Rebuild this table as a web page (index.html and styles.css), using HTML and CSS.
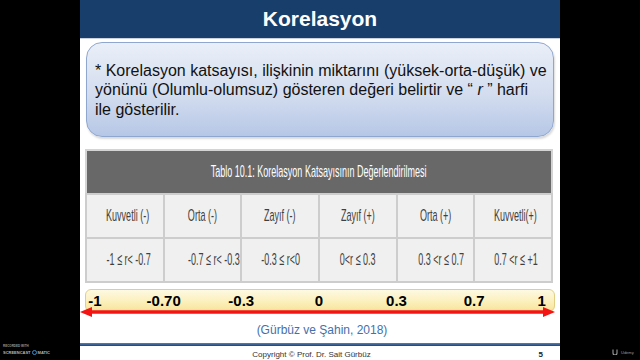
FILE: index.html
```html
<!DOCTYPE html>
<html lang="tr">
<head>
<meta charset="utf-8">
<title>Korelasyon</title>
<link rel="stylesheet" href="styles.css">
</head>
<body>
<div class="stage">
  <div class="slide">
    <header class="title">Korelasyon</header>
    <div class="note">
      <p>* Korelasyon katsayısı, ilişkinin miktarını (yüksek-orta-düşük) ve<br>yönünü (Olumlu-olumsuz) gösteren değeri belirtir ve “ <i>r</i> ” harfi<br>ile gösterilir.</p>
    </div>
    <table class="tbl">
      <thead>
        <tr><th colspan="6"><span class="narrow">Tablo 10.1: Korelasyon Katsayısının Değerlendirilmesi</span></th></tr>
      </thead>
      <tbody>
        <tr>
          <td><span class="narrow">Kuvvetli (-)</span></td>
          <td><span class="narrow">Orta (-)</span></td>
          <td><span class="narrow">Zayıf (-)</span></td>
          <td><span class="narrow">Zayıf (+)</span></td>
          <td><span class="narrow">Orta (+)</span></td>
          <td><span class="narrow">Kuvvetli(+)</span></td>
        </tr>
        <tr>
          <td><span class="narrow">-1 ≤ r&lt; -0.7</span></td>
          <td><span class="narrow">-0.7 ≤ r&lt; -0.3</span></td>
          <td><span class="narrow">-0.3 ≤ r&lt;0</span></td>
          <td><span class="narrow">0&lt;r ≤ 0.3</span></td>
          <td><span class="narrow">0.3 &lt;r ≤ 0.7</span></td>
          <td><span class="narrow">0.7 &lt;r ≤ +1</span></td>
        </tr>
      </tbody>
    </table>
    <div class="scale">
      <div class="bar">
        <span class="tick">-1</span>
        <span class="tick">-0.70</span>
        <span class="tick">-0.3</span>
        <span class="tick">0</span>
        <span class="tick">0.3</span>
        <span class="tick">0.7</span>
        <span class="tick">1</span>
      </div>
      <svg class="arrow" width="475" height="10" viewBox="0 0 475 10">
        <line x1="8" y1="5" x2="467" y2="5" stroke="#f41414" stroke-width="3.5"/>
        <polygon points="0,5 12,0 12,10" fill="#f41414"/>
        <polygon points="475,5 463,0 463,10" fill="#f41414"/>
      </svg>
    </div>
    <div class="cite">(Gürbüz ve Şahin, 2018)</div>
    <div class="rule"></div>
    <footer class="foot">
      <span></span>
      <span class="copy">Copyright © Prof. Dr. Sait Gürbüz</span>
      <span class="page">5</span>
    </footer>
  </div>
  <div class="rec">
    <span class="rec-top">RECORDED WITH</span>
    <span class="rec-main">SCREENCAST <span class="rec-o"></span> MATIC</span>
  </div>
  <div class="udemy">
    <svg width="7" height="6" viewBox="0 0 7 6"><path d="M1 0.5 V4 A2 2 0 0 0 5 4 V0.5" fill="none" stroke="#9a9a9a" stroke-width="1.1"/></svg>
    <span>Udemy</span>
  </div>
</div>
</body>
</html>
```

FILE: styles.css
```css
* { box-sizing: border-box; }

html, body {
  margin: 0;
  padding: 0;
  background: #000;
}

.stage {
  position: relative;
  width: 640px;
  height: 360px;
  display: flex;
  justify-content: center;
  background: #000;
  font-family: "Liberation Sans", Arial, sans-serif;
}

.slide {
  width: 480px;
  height: 360px;
  background: #fff;
  display: flex;
  flex-direction: column;
}

.title {
  height: 40px;
  display: flex;
  align-items: center;
  justify-content: center;
  background: #183f6c;
  border-bottom: 1px solid #c9d2de;
  color: #fff;
  font-weight: 700;
  font-size: 21px;
  padding-bottom: 1px;
}

.note {
  margin: 3px 6px 0 6px;
  height: 97px;
  border: 1.5px solid #8fa7cf;
  border-radius: 16px;
  background: linear-gradient(#eaeff8 0%, #d3ddef 55%, #b6c7e6 100%);
  box-shadow: 1px 2px 2px rgba(0, 0, 0, 0.15);
  display: flex;
  align-items: center;
  padding: 0 2px 0 8px;
}

.note p {
  margin: 0;
  font-size: 16px;
  line-height: 19.5px;
  color: #111;
  white-space: nowrap;
}

.tbl {
  margin: 12px 7px 0 5px;
  width: 468px;
  border-collapse: collapse;
  table-layout: fixed;
  border: 2px solid #d4d4d4;
}

.tbl th {
  height: 44px;
  background: #686868;
  color: #fff;
  font-weight: 400;
  font-size: 17px;
  text-align: center;
  padding: 0;
}

.tbl td {
  height: 44px;
  background: #f0f0f0;
  border: 2px solid #cdcdcd;
  color: #404040;
  font-size: 17px;
  text-align: center;
  padding: 0;
}

.narrow {
  display: inline-block;
  white-space: nowrap;
  transform: scaleX(0.53);
}

.scale {
  position: relative;
  margin: 6px 5px 0 5px;
}

.bar {
  height: 23px;
  border: 1px solid #e2cf84;
  border-radius: 6px;
  background: linear-gradient(#fef9e2 0%, #fbefb8 60%, #f7e39a 100%);
  display: grid;
  grid-template-columns: 68.7px 77.6px 77.6px 77.6px 77.6px 67.7px 0;
  align-items: center;
  padding-left: 9px;
}

.tick {
  width: 0;
  display: flex;
  justify-content: center;
  white-space: nowrap;
  font-weight: 700;
  font-size: 15px;
  color: #000;
}

.arrow {
  position: absolute;
  left: -5px;
  top: 18px;
}

.cite {
  margin-top: 10px;
  height: 16px;
  line-height: 16px;
  text-align: center;
  font-size: 12px;
  color: #4470ab;
  padding-left: 4px;
}

.rule {
  margin-top: 5px;
  height: 3px;
  background: linear-gradient(#5a80b3, #1d4479);
}

.foot {
  margin-top: 3px;
  display: grid;
  grid-template-columns: 1fr auto 1fr;
  align-items: center;
  height: 11px;
  font-size: 8px;
  color: #333;
  padding-right: 17px;
}

.page {
  justify-self: end;
  font-weight: 700;
  color: #222;
}

.rec {
  position: absolute;
  left: 3px;
  top: 345px;
  display: flex;
  flex-direction: column;
  gap: 2px;
  color: #9a9a9a;
  font-size: 3px;
  line-height: 3px;
  font-weight: 700;
}

.rec-main {
  font-size: 4px;
  line-height: 4px;
  display: flex;
  align-items: center;
  gap: 1px;
  color: #b5b5b5;
}

.rec-o {
  display: inline-block;
  width: 5px;
  height: 5px;
  border-radius: 50%;
  border: 1px solid #3a8fd0;
}

.udemy {
  position: absolute;
  left: 612px;
  top: 349px;
  display: flex;
  align-items: center;
  gap: 2px;
  color: #9a9a9a;
  font-size: 4px;
}
```
